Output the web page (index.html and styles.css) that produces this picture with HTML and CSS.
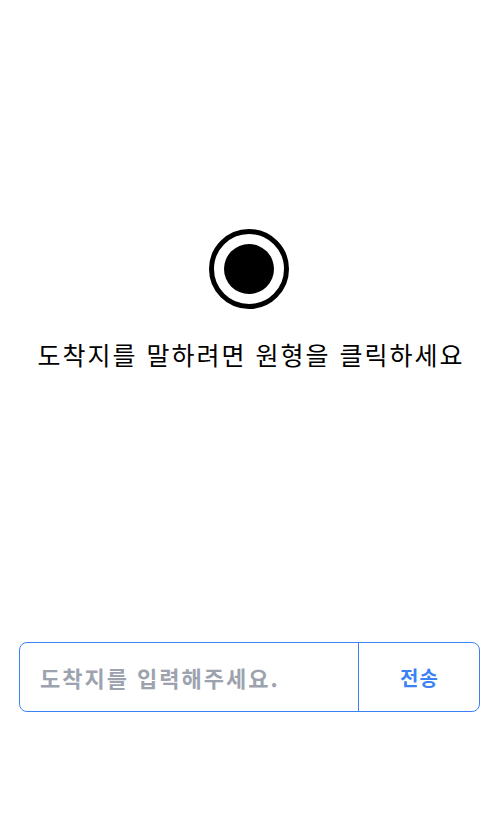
FILE: index.html
```html
<!DOCTYPE html>
<html lang="ko">
<head>
<meta charset="utf-8">
<link rel="stylesheet" href="styles.css">
</head>
<body>
<div class="page">
  <div class="voice">
    <button class="mic" type="button" aria-label="record">
      <svg width="82" height="82" viewBox="0 0 82 82">
        <circle cx="41" cy="41" r="37.5" fill="none" stroke="#000" stroke-width="5"/>
        <circle cx="41" cy="41" r="25" fill="#000"/>
      </svg>
    </button>
    <p class="hint">도착지를 말하려면 원형을 클릭하세요</p>
  </div>
  <form class="bar">
    <input class="field" type="text" placeholder="도착지를 입력해주세요.">
    <button class="send" type="button">전송</button>
  </form>
</div>
</body>
</html>
```
FILE: styles.css
```css
html, body {
  margin: 0;
  padding: 0;
  background: #fff;
}
body {
  font-family: "Noto Sans CJK KR", "Noto Sans", sans-serif;
  width: 500px;
  height: 814px;
  overflow: hidden;
}
.page {
  display: flex;
  flex-direction: column;
  align-items: center;
  padding-top: 228px;
}
.voice {
  display: flex;
  flex-direction: column;
  align-items: center;
}
.mic {
  border: 0;
  background: none;
  padding: 0;
  margin-left: -1px;
  width: 82px;
  height: 82px;
  display: block;
  cursor: pointer;
}
.mic svg { display: block; }
.hint {
  margin: 26px 0 0;
  font-size: 25px;
  line-height: 36px;
  color: #000;
  font-weight: 400;
  letter-spacing: 2px;
  text-indent: 2px;
}
.bar {
  align-self: flex-start;
  margin: 270px 0 0 19px;
  width: 461px;
  height: 70px;
  box-sizing: border-box;
  border: 1px solid #3b82f6;
  border-radius: 8px;
  display: flex;
  overflow: hidden;
}
.field {
  flex: 1;
  border: 0;
  border-right: 1px solid #3b82f6;
  padding: 0 0 0 20px;
  font-family: inherit;
  font-size: 22px;
  font-weight: 700;
  letter-spacing: 2px;
  color: #333;
  outline: none;
  background: transparent;
  min-width: 0;
}
.field::placeholder {
  color: #9ca3af;
}
.send {
  width: 120px;
  border: 0;
  background: transparent;
  font-family: inherit;
  font-size: 20px;
  font-weight: 700;
  letter-spacing: 1px;
  text-indent: 1px;
  color: #3b82f6;
  padding: 0;
  cursor: pointer;
}
```
